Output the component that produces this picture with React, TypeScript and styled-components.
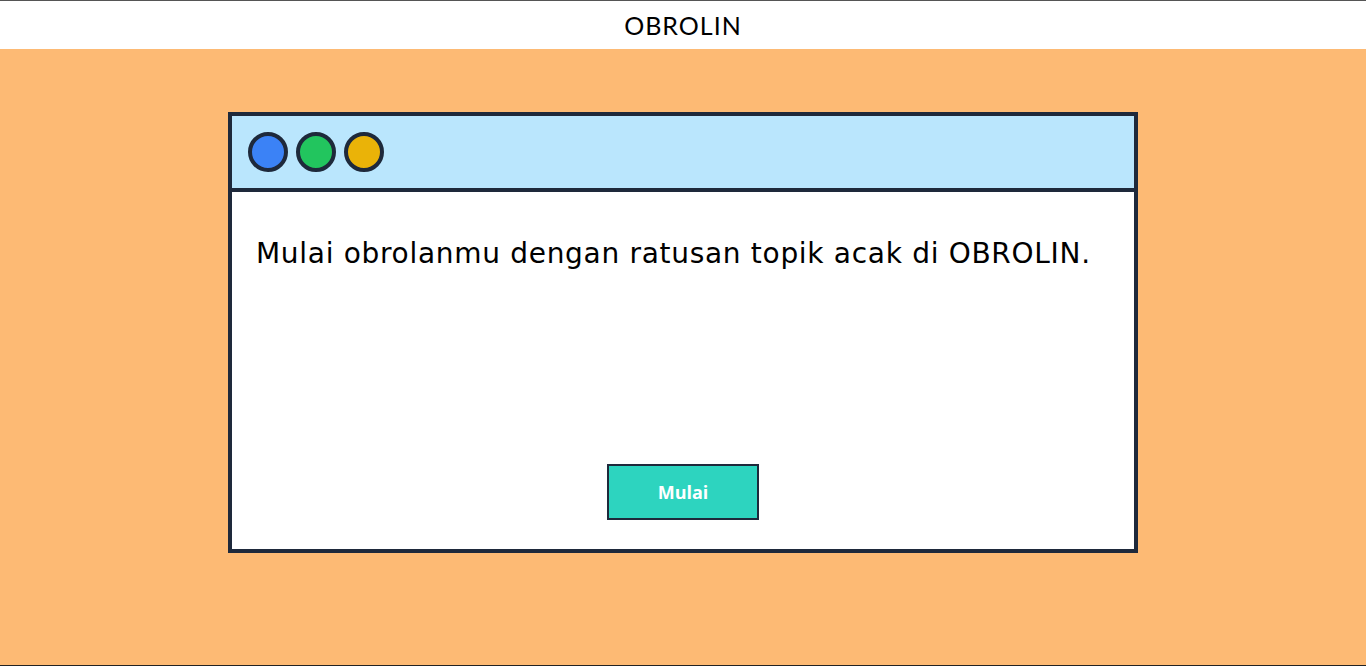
import styled, { createGlobalStyle } from 'styled-components';

const GlobalStyle = createGlobalStyle`
  html, body {
    margin: 0;
    padding: 0;
  }
  body {
    font-family: 'Open Sans', 'Liberation Sans', sans-serif;
  }
`;

const dots = ['#3b82f6', '#22c55e', '#eab308'];

const App = () => {
  return (
    <Page>
      <GlobalStyle />
      <Header>OBROLIN</Header>
      <Main>
        <Window>
          <TitleBar>
            {dots.map((c) => (
              <Dot key={c} color={c} />
            ))}
          </TitleBar>
          <Body>
            <Lead>Mulai obrolanmu dengan ratusan topik acak di OBROLIN.</Lead>
            <StartButton type="button">Mulai</StartButton>
          </Body>
        </Window>
      </Main>
    </Page>
  );
};

export default App;

const Page = styled.div`
  display: flex;
  flex-direction: column;
  height: 666px;
  box-sizing: border-box;
  border-top: 1px solid #555;
  border-bottom: 1px solid #222;
  background-color: #fdba74;
`;

const Header = styled.header`
  height: 48px;
  display: flex;
  align-items: center;
  justify-content: center;
  background-color: #fff;
  font-family: Lato, 'Open Sans', sans-serif;
  font-size: 25px;
  letter-spacing: 1px;
  color: #000;
`;

const Main = styled.main`
  flex: 1;
  display: flex;
  justify-content: center;
  padding-top: 63px;
`;

const Window = styled.section`
  width: 910px;
  height: 441px;
  box-sizing: border-box;
  display: flex;
  flex-direction: column;
  border: 4px solid #1e293b;
  background-color: #fff;
`;

const TitleBar = styled.div`
  display: flex;
  gap: 8px;
  padding: 16px;
  background-color: #bae6fd;
  border-bottom: 4px solid #1e293b;
`;

const Dot = styled.span<{ color: string }>`
  width: 40px;
  height: 40px;
  box-sizing: border-box;
  border-radius: 50%;
  border: 4px solid #1e293b;
  background-color: ${({ color }) => color};
`;

const Body = styled.div`
  flex: 1;
  display: flex;
  flex-direction: column;
  align-items: center;
  justify-content: space-between;
  padding: 42px 24px 29px;
`;

const Lead = styled.p`
  align-self: stretch;
  margin: 0;
  font-family: 'DejaVu Sans', 'Open Sans', sans-serif;
  font-size: 28px;
  letter-spacing: 0.7px;
  line-height: 40px;
  color: #000;
`;

const StartButton = styled.button`
  width: 152px;
  height: 56px;
  border: 2px solid #1e293b;
  background-color: #2dd4bf;
  color: #fff;
  font-family: 'Open Sans', sans-serif;
  font-weight: 700;
  font-size: 18px;
  cursor: pointer;
`;
